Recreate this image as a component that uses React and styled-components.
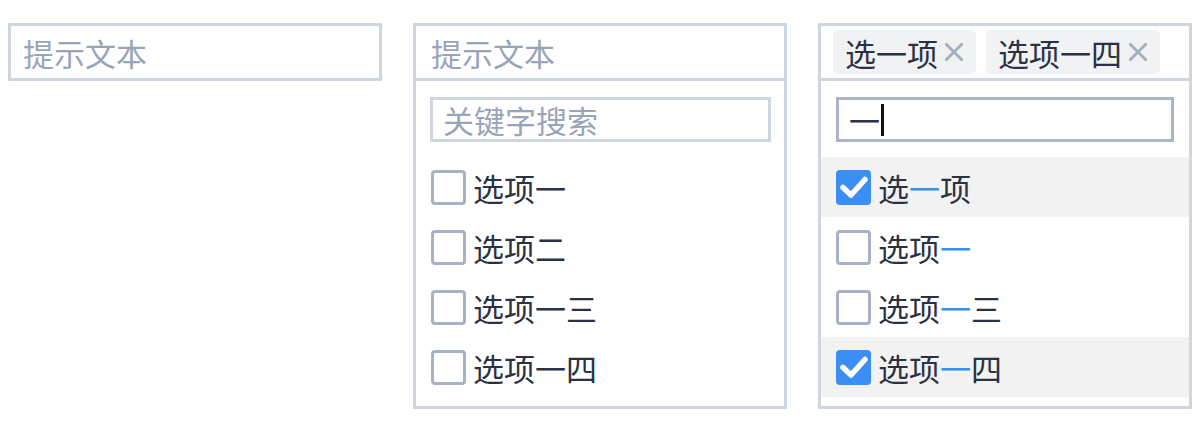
import React from 'react'
import styled, { createGlobalStyle } from 'styled-components'

const GlobalStyle = createGlobalStyle`
  html, body {
    margin: 0;
    padding: 0;
    background: #ffffff;
  }
  body {
    font-family: "Noto Sans CJK SC", "Noto Sans", sans-serif;
    color: #2b3142;
  }
`

const Page = styled.div`
  display: flex;
  align-items: flex-start;
  gap: 31px;
  padding: 23px 8px 0 8px;
`

const Panel = styled.div`
  width: 374px;
  box-sizing: border-box;
  border: 3px solid #cfd6e1;
  background: #fff;
  display: flex;
  flex-direction: column;
`

const Header = styled.div`
  height: 52px;
  display: flex;
  align-items: center;
  gap: 10px;
  padding: 0 12px;
  box-sizing: content-box;
  border-bottom: ${p => (p.$open ? '3px solid #cfd6e1' : 'none')};
`

const Placeholder = styled.span`
  font-size: 31px;
  line-height: 1;
  color: #98a5b8;
  padding-left: ${p => p.$indent || 0}px;
`

const Tag = styled.div`
  height: 44px;
  display: flex;
  align-items: center;
  gap: 6px;
  padding: 0 12px 0 12px;
  background: #f1f2f4;
  border-radius: 5px;
  font-size: 31px;
  line-height: 1;
  color: #2b3142;
`

const Body = styled.div`
  display: flex;
  flex-direction: column;
  padding: 16px 0 9px 0;
`

const Search = styled.div`
  height: 45px;
  margin: 0 ${p => (p.$focus ? '15px' : '13px')} 15px ${p => (p.$focus ? '15px' : '14px')};
  box-sizing: border-box;
  border: 3px solid ${p => (p.$focus ? '#a9b4c5' : '#cfd6e1')};
  display: flex;
  align-items: center;
  padding-left: 10px;
  font-size: 31px;
  line-height: 1;
`

const Typed = styled.span`
  color: #2b3142;
`

const Caret = styled.span`
  display: inline-block;
  width: 3px;
  height: 32px;
  background: #111;
  margin-left: 1px;
`

const Row = styled.div`
  height: 60px;
  display: flex;
  align-items: center;
  gap: 7px;
  padding-left: 15px;
  background: ${p => (p.$active ? '#f2f2f2' : 'transparent')};
  font-size: 31px;
  line-height: 1;
`

const Box = styled.span`
  width: 35px;
  height: 35px;
  box-sizing: border-box;
  border-radius: 4px;
  border: ${p => (p.$checked ? 'none' : '3px solid #a8b2c5')};
  background: ${p => (p.$checked ? '#3a8ef5' : '#fff')};
  display: flex;
  align-items: center;
  justify-content: center;
  flex-shrink: 0;
`

const Label = styled.span`
  color: #2b3142;
`

const Hit = styled.span`
  color: #3b8fe8;
`

const Check = () => (
  <svg width="30" height="30" viewBox="0 0 30 30">
    <path d="M4 15.5 L12 23 L26 7.5" fill="none" stroke="#fff" strokeWidth="5.5" strokeLinecap="round" strokeLinejoin="round" />
  </svg>
)

const Cross = () => (
  <svg width="20" height="20" viewBox="0 0 20 20">
    <path d="M1.5 1.5 L18.5 18.5 M18.5 1.5 L1.5 18.5" stroke="#a5b0bf" strokeWidth="3" />
  </svg>
)

const plainOptions = ['选项一', '选项二', '选项一三', '选项一四']

const highlight = text =>
  text.split('一').map((part, i, arr) => (
    <React.Fragment key={i}>
      {part}
      {i < arr.length - 1 && <Hit>一</Hit>}
    </React.Fragment>
  ))

const filtered = [
  { text: '选一项', checked: true },
  { text: '选项一', checked: false },
  { text: '选项一三', checked: false },
  { text: '选项一四', checked: true },
]

const App = () => {
  return (
    <>
      <GlobalStyle />
      <Page>
        <Panel>
          <Header>
            <Placeholder>提示文本</Placeholder>
          </Header>
        </Panel>

        <Panel>
          <Header $open>
            <Placeholder $indent={3}>提示文本</Placeholder>
          </Header>
          <Body>
            <Search>
              <Placeholder>关键字搜索</Placeholder>
            </Search>
            {plainOptions.map(o => (
              <Row key={o}>
                <Box />
                <Label>{o}</Label>
              </Row>
            ))}
          </Body>
        </Panel>

        <Panel>
          <Header $open>
            <Tag>
              选一项
              <Cross />
            </Tag>
            <Tag>
              选项一四
              <Cross />
            </Tag>
          </Header>
          <Body>
            <Search $focus>
              <Typed>一</Typed>
              <Caret />
            </Search>
            {filtered.map(o => (
              <Row key={o.text} $active={o.checked}>
                <Box $checked={o.checked}>{o.checked && <Check />}</Box>
                <Label>{highlight(o.text)}</Label>
              </Row>
            ))}
          </Body>
        </Panel>
      </Page>
    </>
  )
}

export default App
